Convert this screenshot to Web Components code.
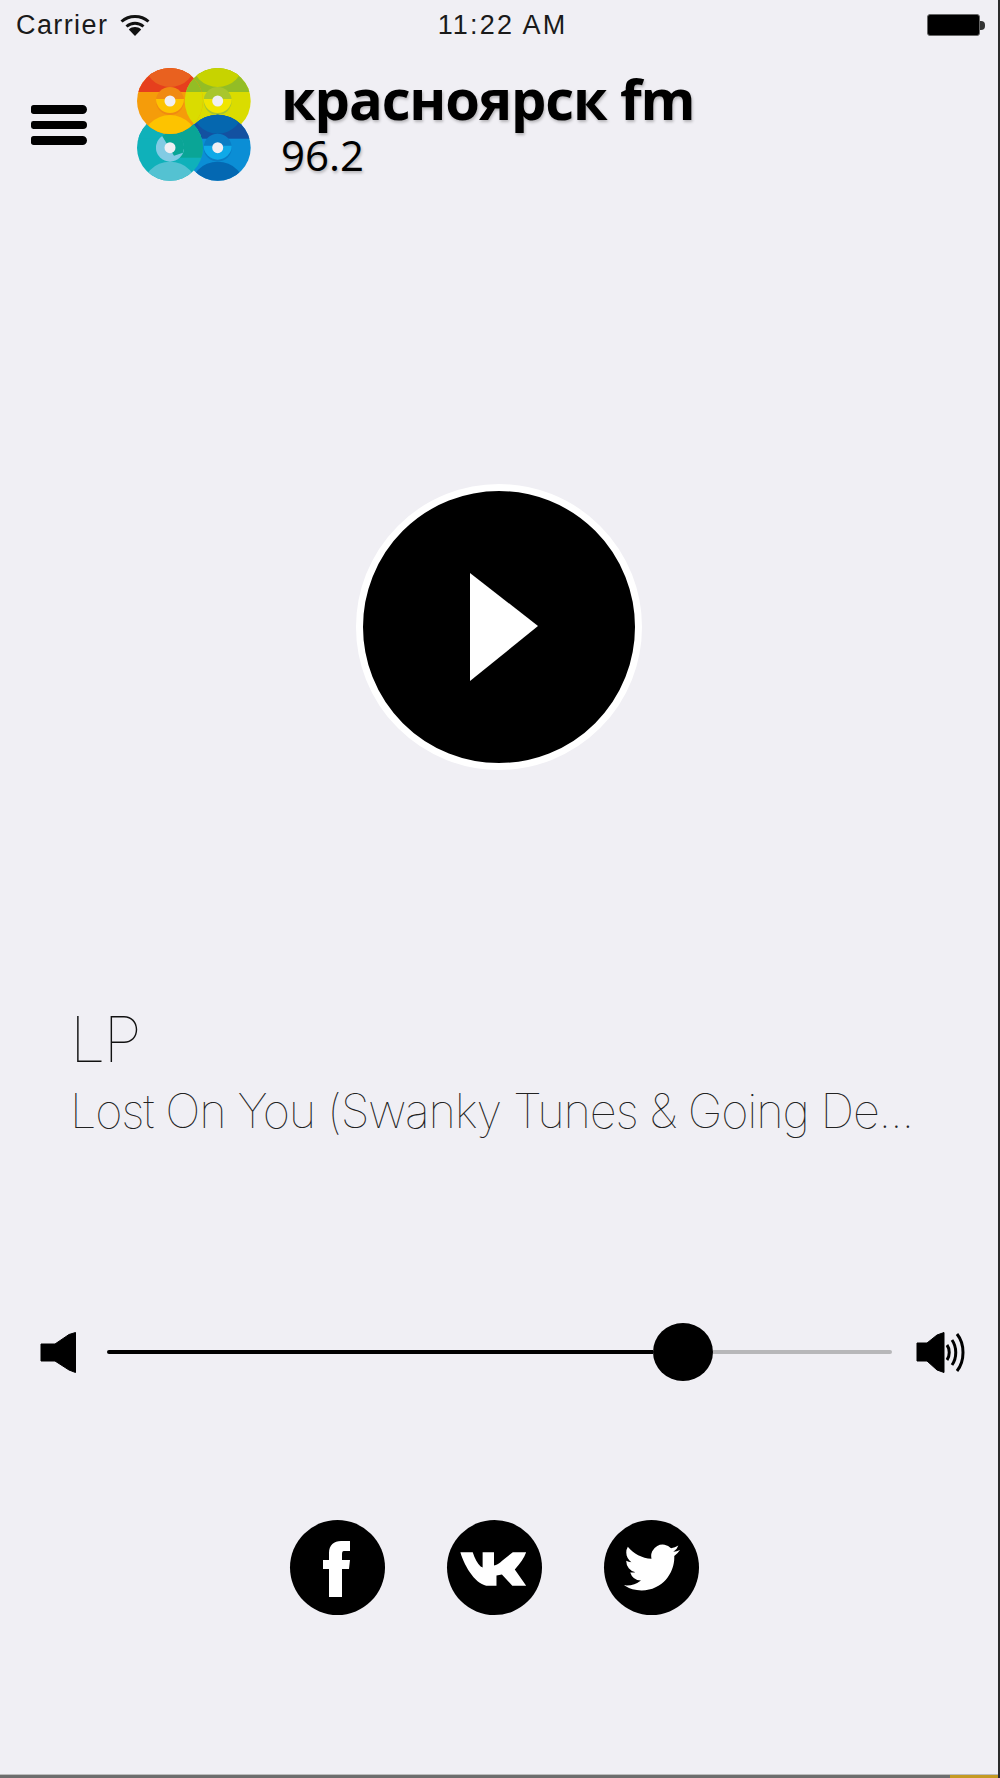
<!DOCTYPE html>
<html lang="ru">
<head>
<meta charset="utf-8">
<title>Красноярск FM</title>
<style>
  html, body { margin: 0; padding: 0; background: #f0eff4; }
</style>
</head>
<body>
<radio-app>
  <status-bar></status-bar>
  <station-header></station-header>
  <play-button></play-button>
  <track-info>
    <span slot="artist">LP</span>
    <span slot="title">Lost On You (Swanky Tunes &amp; Going De...</span>
  </track-info>
  <volume-slider></volume-slider>
  <social-links></social-links>
</radio-app>

<script>
class RadioApp extends HTMLElement{
    constructor(){
        super();
        this.attachShadow({mode:'open'});
    }
    connectedCallback(){
        this.shadowRoot.innerHTML = `
            <style>
                :host{
                    display: flex;
                    flex-direction: column;
                    box-sizing: border-box;
                    width: 1000px;
                    height: 1778px;
                    overflow: hidden;
                    background-color: #f0eff4;
                    border-right: 2px solid #2b2b2b;
                    color: #000;
                }
                .space{ flex: 1; }
                .strip{
                    display: flex;
                    height: 3px;
                    width: 1000px;
                    border-top: 1px solid #bdbdbd;
                    background-color: #6d6d6d;
                }
                .strip i{ margin-left: auto; width: 50px; background-color: #c59a22; }
            </style>
            <slot></slot>
            <div class="space"></div>
            <div class="strip"><i></i></div>
        `;
    }
}
customElements.define('radio-app', RadioApp);

class StatusBar extends HTMLElement{
    constructor(){
        super();
        this.attachShadow({mode:'open'});
    }
    connectedCallback(){
        this.shadowRoot.innerHTML = `
            <style>
                :host{
                    display: grid;
                    grid-template-columns: 1fr auto 1fr;
                    align-items: center;
                    height: 50px;
                    padding: 0 13px 0 16px;
                    font: 27px "Liberation Sans", sans-serif;
                    color: #1a1a1a;
                }
                .left{ display: flex; align-items: center; gap: 12px; letter-spacing: 1.4px; }
                .batt{ display: flex; align-items: center; justify-self: end; }
                .cell{
                    width: 51px;
                    height: 20px;
                    background-color: #000;
                    border: 1px solid #666;
                    border-radius: 3px;
                }
                .nub{ width: 5px; height: 9px; background-color: #333; border-radius: 0 4px 4px 0; }
                .time{ margin-left: 4px; letter-spacing: 2.2px; }
            </style>
            <div class="left">
                <span>Carrier</span>
                <svg width="30" height="22" viewBox="0 0 30 22">
                    <path d="M1.5 7.5C9 .7 21 .7 28.5 7.5" fill="none" stroke="#111" stroke-width="3"/>
                    <path d="M6.5 12.5C11.5 8 18.5 8 23.5 12.5" fill="none" stroke="#111" stroke-width="3"/>
                    <path d="M8.8 15.4C12.5 12.2 17.5 12.2 21.2 15.4L15 22Z" fill="#111"/>
                </svg>
            </div>
            <span class="time">11:22 AM</span>
            <div class="batt"><div class="cell"></div><div class="nub"></div></div>
        `;
    }
}
customElements.define('status-bar', StatusBar);

class StationHeader extends HTMLElement{
    constructor(){
        super();
        this.attachShadow({mode:'open'});
    }
    // one disc of the logo, drawn round 0,0
    static disc(x, y, c){
        return `
            <g transform="translate(${x} ${y})" clip-path="url(#disc)">
                <rect x="-34" y="-34" width="68" height="68" fill="${c.lower}"/>
                <rect x="-34" y="-34" width="68" height="25" fill="${c.upper}"/>
                ${c.extra || ''}
                <circle cy="-40" r="26" fill="${c.cap}"/>
                <circle cy="42" r="28" fill="${c.bottom}"/>
                <circle r="14" fill="${c.ringA}"/>
                <path d="M-14 -2H14A14 14 0 0 1 -14 -2Z" fill="${c.ringB}"/>
                ${c.ringExtra || ''}
                <circle r="5.5" fill="#f0eff4"/>
            </g>`;
    }
    connectedCallback(){
        const red = {upper:'#e63f1d', lower:'#f59c0a', cap:'#e9611f', bottom:'#fdc300', ringA:'#f08a12', ringB:'#fdc300'};
        const green = {upper:'#93bd25', lower:'#dadc00', cap:'#c7d300', bottom:'#dadc00', ringA:'#a9c62c', ringB:'#f0e500'};
        const teal = {upper:'#0fb1ba', lower:'#0fb1ba', cap:'#0fb1ba', bottom:'#54c2d2', ringA:'#82cbe4', ringB:'#82cbe4',
            extra:'<rect x="0" y="-34" width="34" height="44" fill="#0aa596"/>',
            ringExtra:'<path d="M-8 -12A14 14 0 0 1 13 5L4 8Z" fill="#0aa596"/>'};
        const blue = {upper:'#1351a1', lower:'#0b8ed5', cap:'#0567af', bottom:'#0468b2', ringA:'#0a7cc4', ringB:'#0fa9e8'};
        const D = StationHeader.disc;
        this.shadowRoot.innerHTML = `
            <style>
                :host{
                    display: flex;
                    align-items: flex-start;
                    height: 150px;
                }
                .burger{
                    display: flex;
                    flex-direction: column;
                    gap: 7px;
                    width: 56px;
                    margin: 55px 0 0 31px;
                }
                .burger i{ display: block; height: 8.5px; background-color: #000; border-radius: 3px 5px 5px 3px; }
                svg{ margin: 18px 0 0 50px; }
                .name{
                    display: flex;
                    flex-direction: column;
                    margin: 18px 0 0 28px;
                    font-family: "Open Sans", sans-serif;
                    color: #000;
                    text-shadow: 1px 2px 3px rgba(0,0,0,.25);
                }
                .name b{ font-size: 56px; line-height: 60px; font-weight: 700; letter-spacing: -1.1px; white-space: nowrap; }
                .name span{ font-size: 42px; line-height: 46px; margin-top: 4px; }
            </style>
            <div class="burger"><i></i><i></i><i></i></div>
            <svg width="116" height="114" viewBox="0 0 116 114">
                <defs>
                    <clipPath id="disc"><circle r="33"/></clipPath>
                    <clipPath id="over"><circle cx="33" cy="33" r="33"/></clipPath>
                </defs>
                ${D(80.7, 33, green)}
                ${D(80.7, 79.7, blue)}
                ${D(33, 79.7, teal)}
                ${D(33, 33, red)}
                <g clip-path="url(#over)">${D(80.7, 33, green)}</g>
            </svg>
            <div class="name">
                <b>красноярск fm</b>
                <span>96.2</span>
            </div>
        `;
    }
}
customElements.define('station-header', StationHeader);

class PlayButton extends HTMLElement{
    constructor(){
        super();
        this.attachShadow({mode:'open'});
    }
    connectedCallback(){
        this.shadowRoot.innerHTML = `
            <style>
                :host{
                    display: flex;
                    justify-content: center;
                    margin-top: 284px;
                }
                .btn{
                    display: flex;
                    justify-content: center;
                    align-items: center;
                    box-sizing: border-box;
                    width: 286px;
                    height: 286px;
                    background-color: #000;
                    border: 7px solid #fff;
                    border-radius: 50%;
                }
                svg{ margin-left: 9px; }
            </style>
            <div class="btn">
                <svg width="70" height="110" viewBox="0 0 70 110"><path d="M1 1L69 54L1 109Z" fill="#fff"/></svg>
            </div>
        `;
    }
}
customElements.define('play-button', PlayButton);

class TrackInfo extends HTMLElement{
    constructor(){
        super();
        this.attachShadow({mode:'open'});
    }
    connectedCallback(){
        this.shadowRoot.innerHTML = `
            <style>
                :host{
                    display: flex;
                    flex-direction: column;
                    margin: 231px 0 0 70px;
                    font-family: Inter, sans-serif;
                    font-weight: 100;
                    color: #111;
                    white-space: nowrap;
                }
                .artist{ font-size: 63px; line-height: 76px; letter-spacing: -2px; }
                .title{ font-size: 47px; line-height: 68px; color: #222; letter-spacing: -1.2px; }
            </style>
            <div class="artist"><slot name="artist"></slot></div>
            <div class="title"><slot name="title"></slot></div>
        `;
    }
}
customElements.define('track-info', TrackInfo);

class VolumeSlider extends HTMLElement{
    constructor(){
        super();
        this.attachShadow({mode:'open'});
    }
    connectedCallback(){
        this.shadowRoot.innerHTML = `
            <style>
                :host{
                    display: flex;
                    align-items: center;
                    margin-top: 177px;
                    padding-left: 40px;
                    height: 60px;
                }
                .low{ width: 37px; height: 41px; margin-right: 30px; flex: none; }
                .high{ width: 50px; height: 41px; margin-left: 24px; flex: none; }
                .done{ width: 546px; height: 4px; background-color: #000; border-radius: 2px 0 0 2px; }
                .knob{ width: 60px; height: 58px; background-color: #000; border-radius: 50%; flex: none; }
                .left{ width: 179px; height: 4px; background-color: #b7b7b9; border-radius: 0 2px 2px 0; }
            </style>
            <svg class="low" viewBox="0 0 37 41"><path d="M1 12H15L29 2.5 35.5 .5V40.5L29 38 15 29H1Z" fill="#000" stroke="#000" stroke-linejoin="round"/></svg>
            <div class="done"></div>
            <div class="knob"></div>
            <div class="left"></div>
            <svg class="high" viewBox="0 0 50 41">
                <path d="M1 11H11L21 3 28 .5V40.5L21 38 11 29H1Z" fill="#000" stroke="#000" stroke-linejoin="round"/>
                <g fill="none" stroke="#000" stroke-width="3">
                    <path d="M31 13C34 17 34 24 31 28"/>
                    <path d="M36 8C41 15 41 26 36 33"/>
                    <path d="M41 2C49 12 49 29 41 39"/>
                </g>
            </svg>
        `;
    }
}
customElements.define('volume-slider', VolumeSlider);

class SocialLinks extends HTMLElement{
    constructor(){
        super();
        this.attachShadow({mode:'open'});
    }
    connectedCallback(){
        this.shadowRoot.innerHTML = `
            <style>
                :host{
                    display: flex;
                    gap: 62px;
                    margin: 138px 0 0 290px;
                }
                a{
                    display: flex;
                    justify-content: center;
                    align-items: center;
                    width: 95px;
                    height: 95px;
                    background-color: #000;
                    border-radius: 50%;
                }
            </style>
            <a>
                <svg width="95" height="95" viewBox="0 0 95 95"><path d="M39 77V49H33V40H39V33C39 25 44 21 51 21H60V31H54C52 31 52 33 52 35V40H60L59 49H52V77Z" fill="#fff"/></svg>
            </a>
            <a>
                <svg width="95" height="95" viewBox="0 0 96 96"><path d="M13.5 32.5H26C28 39 31 44 34 47L36 48V32.5H47.5V46C50 46 53 44 56 41L66.5 32.5H80C78 38 74 44 68.5 50L80 66.5H66L55.5 55L50 56V66.5H42C30 66.5 18 48 13.5 32.5Z" fill="#fff"/></svg>
            </a>
            <a>
                <svg width="56" height="47" viewBox="0 2 24 20" preserveAspectRatio="none"><path d="M23.953 4.57a10 10 0 01-2.825.775 4.958 4.958 0 002.163-2.723c-.951.555-2.005.959-3.127 1.184a4.92 4.92 0 00-8.384 4.482C7.69 8.095 4.067 6.13 1.64 3.162a4.822 4.822 0 00-.666 2.475c0 1.71.87 3.213 2.188 4.096a4.904 4.904 0 01-2.228-.616v.06a4.923 4.923 0 003.946 4.827 4.996 4.996 0 01-2.212.085 4.936 4.936 0 004.604 3.417 9.867 9.867 0 01-6.102 2.105c-.39 0-.779-.023-1.17-.067a13.995 13.995 0 007.557 2.209c9.053 0 13.998-7.496 13.998-13.985 0-.21 0-.42-.015-.63A9.935 9.935 0 0024 4.59z" fill="#fff"/></svg>
            </a>
        `;
    }
}
customElements.define('social-links', SocialLinks);
</script>
</body>
</html>
